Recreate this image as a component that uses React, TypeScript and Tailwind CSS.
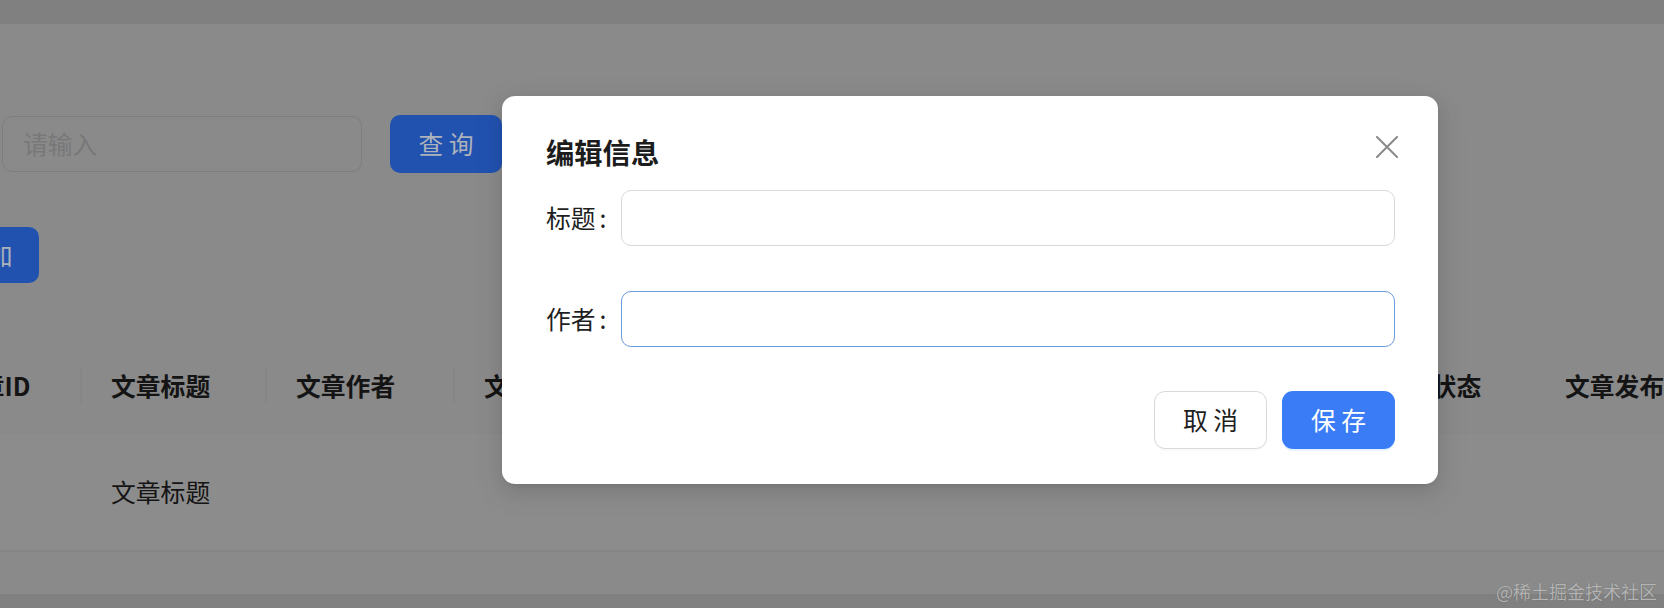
import React from "react";

const headers: { label: string; w: string; sep: boolean }[] = [
  { label: "文章ID", w: "w-[156px]", sep: true },
  { label: "文章标题", w: "w-[185px]", sep: true },
  { label: "文章作者", w: "w-[188px]", sep: true },
  { label: "文章内容", w: "w-[245px]", sep: true },
  { label: "文章分类", w: "w-[300px]", sep: true },
  { label: "创建时间", w: "w-[353px]", sep: true },
  { label: "文章状态", w: "w-[183px]", sep: false },
  { label: "文章发布时间", w: "w-[260px]", sep: false },
];

export default function App() {
  return (
    <div className="relative w-[1664px] h-[608px] overflow-hidden font-['Noto_Sans_CJK_SC',sans-serif] bg-[#8a8a8a]">
      {/* top band */}
      <div className="h-[24px] bg-[#808080]" />

      {/* page content */}
      <div className="flex flex-col h-[570px]">
        {/* search row */}
        <div className="mt-[91px] flex items-center h-[58px] pl-[2px]">
          <div className="w-[360px] h-[56px] rounded-[10px] border border-[#7d7d7d] flex items-center pl-[20px] text-[24.8px] text-[#787878]">
            请输入
          </div>
          <div className="ml-[28px] w-[112px] h-[58px] rounded-[10px] bg-[#2152b0] flex items-center justify-center text-[24.8px] text-[#aeb3bb]">
            查 询
          </div>
        </div>

        {/* add button */}
        <div className="mt-[54px] h-[56px] flex">
          <div className="ml-[-69px] w-[108px] h-[56px] rounded-[10px] bg-[#2152b0] flex items-center justify-center text-[24.8px] text-[#aeb3bb]">
            添 加
          </div>
        </div>

        {/* table */}
        <div className="mt-[55px] ml-[-74px]">
          <div className="flex h-[96px] bg-[#8a8a8a] border-b border-[#888888]">
            {headers.map((h) => (
              <div key={h.label} className={`${h.w} shrink-0 relative flex items-center pl-[29px] text-[24.8px] font-bold text-[#141414] whitespace-nowrap`}>
                {h.label}
                {h.sep && <div className="absolute right-0 top-[30px] h-[36px] w-[2px] bg-[#868686]" />}
              </div>
            ))}
          </div>
          <div className="flex h-[118px] bg-[#8c8c8c] border-b-2 border-[#858585]">
            <div className="w-[156px] shrink-0" />
            <div className="w-[185px] shrink-0 flex items-center pl-[29px] text-[24.8px] text-[#141414]">文章标题</div>
          </div>
        </div>
        <div className="flex-1 bg-[#8a8a8a]" />
      </div>

      {/* bottom band */}
      <div className="h-[14px] bg-[#808080]" />

      {/* watermark */}
      <div className="absolute right-[7px] bottom-[8px] text-[18px] leading-[18px] text-[#b4b4b4] [text-shadow:0_0_1px_rgba(0,0,0,0.3)]">
        @稀土掘金技术社区
      </div>

      {/* modal */}
      <div className="absolute left-[502px] top-[96px] w-[936px] h-[388px] bg-white rounded-[13px] shadow-[0_6px_16px_0_rgba(0,0,0,0.08),0_3px_6px_-4px_rgba(0,0,0,0.12),0_9px_28px_8px_rgba(0,0,0,0.05)] pl-[44px] pr-[43px] pt-[38px]">
        <div className="flex items-start justify-between">
          <div className="text-[28.3px] leading-[36px] font-bold text-[#1c1c1c]">编辑信息</div>
          <svg className="mt-[2px] mr-[-3px]" width="22" height="22" viewBox="0 0 22 22">
            <path d="M1 1 L21 21 M21 1 L1 21" stroke="#8a8a8a" strokeWidth="2" strokeLinecap="round" fill="none" />
          </svg>
        </div>

        <div className="mt-[20px] flex items-center h-[56px]">
          <div className="w-[75px] shrink-0 text-[24.8px] text-[#1f1f1f] flex items-center">
            标题<span className="ml-[4px]">:</span>
          </div>
          <div className="flex-1 h-[56px] rounded-[10px] border border-[#d9d9d9] bg-white" />
        </div>

        <div className="mt-[45px] flex items-center h-[56px]">
          <div className="w-[75px] shrink-0 text-[24.8px] text-[#1f1f1f] flex items-center">
            作者<span className="ml-[4px]">:</span>
          </div>
          <div className="flex-1 h-[56px] rounded-[10px] border border-[#6c9be2] bg-white" />
        </div>

        <div className="mt-[44px] flex justify-end gap-[15px]">
          <div className="w-[113px] h-[58px] rounded-[11px] border border-[#d9d9d9] bg-white flex items-center justify-center text-[24.8px] text-[#1f1f1f] shadow-[0_2px_0_rgba(0,0,0,0.02)]">
            取 消
          </div>
          <div className="w-[113px] h-[58px] rounded-[11px] bg-[#3a7cf6] flex items-center justify-center text-[24.8px] text-white shadow-[0_2px_0_rgba(5,145,255,0.1)]">
            保 存
          </div>
        </div>
      </div>
    </div>
  );
}
